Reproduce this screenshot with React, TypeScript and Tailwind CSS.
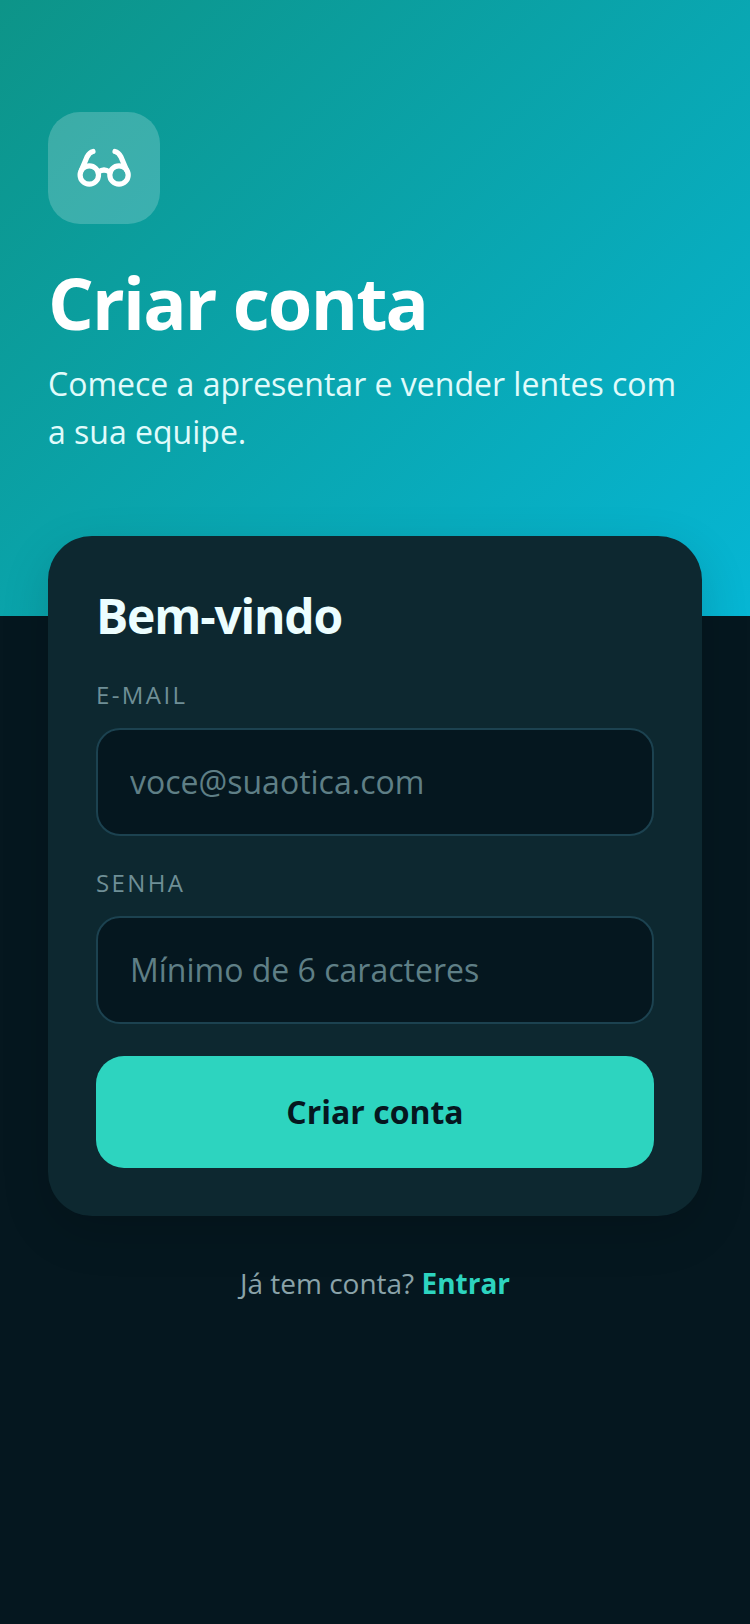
const GlassesIcon = () => {
  return (
    <svg width="56" height="56" viewBox="0 0 56 56" fill="none" stroke="white" strokeWidth="5.2" strokeLinecap="round" strokeLinejoin="round">
      <circle cx="13.3" cy="35" r="9.2" />
      <circle cx="43" cy="35" r="9.2" />
      <path d="M22.5 32Q28 28 33.5 32" />
      <path d="M5.5 30 11 17C12 15 14 12 17 11.5" />
      <path d="M50.5 30 45 17C44 15 42 12 39 11.5" />
    </svg>
  );
};

const Field = ({ label, placeholder, type }: { label: string; placeholder: string; type: string }) => {
  return (
    <div className="flex flex-col">
      <label className="text-[24px] leading-[30px] tracking-[0.1em] text-[#6f8f96]">{label}</label>
      <input
        type={type}
        placeholder={placeholder}
        className="mt-[18px] h-[108px] w-full rounded-[24px] border-2 border-[#1c4250] bg-[#05171f] px-[32px] pb-[2px] text-[32px] text-white outline-none placeholder:text-[#5f7f86]"
      />
    </div>
  );
};

export default function App() {
  return (
    <div className="min-h-[1624px] bg-[#05171f] font-['Open_Sans',sans-serif]">
      <div className="h-[616px] bg-[linear-gradient(135deg,#0d9488_0%,#06b6d4_100%)] px-[48px] pt-[112px]">
        <div className="flex h-[112px] w-[112px] items-center justify-center rounded-[32px] bg-white/20">
          <GlassesIcon />
        </div>
        <h1 className="mt-[32px] text-[72px] leading-[92px] font-bold tracking-tight text-white">Criar conta</h1>
        <p className="mt-[12px] text-[32px] leading-[48px] text-[#e0fbfb]">
          Comece a apresentar e vender lentes com a sua equipe.
        </p>
      </div>
      <div className="mx-[48px] -mt-[80px] flex flex-col rounded-[44px] bg-[#0d2830] p-[48px] shadow-[0_16px_48px_rgba(0,0,0,0.15)]">
        <h2 className="text-[48px] leading-[64px] font-bold tracking-tight text-[#ecfeff]">Bem-vindo</h2>
        <div className="mt-[32px] flex flex-col gap-[32px]">
          <Field label="E-MAIL" placeholder="voce@suaotica.com" type="email" />
          <Field label="SENHA" placeholder="Mínimo de 6 caracteres" type="password" />
        </div>
        <button className="mt-[32px] h-[112px] rounded-[28px] bg-[#2dd4bf] text-[32px] font-bold text-[#05171f]">Criar conta</button>
      </div>
      <p className="mt-[47px] text-center text-[28px] leading-[40px] text-[#8aa3a9]">
        Já tem conta? <span className="font-bold text-[#2dd4bf]">Entrar</span>
      </p>
    </div>
  );
}
